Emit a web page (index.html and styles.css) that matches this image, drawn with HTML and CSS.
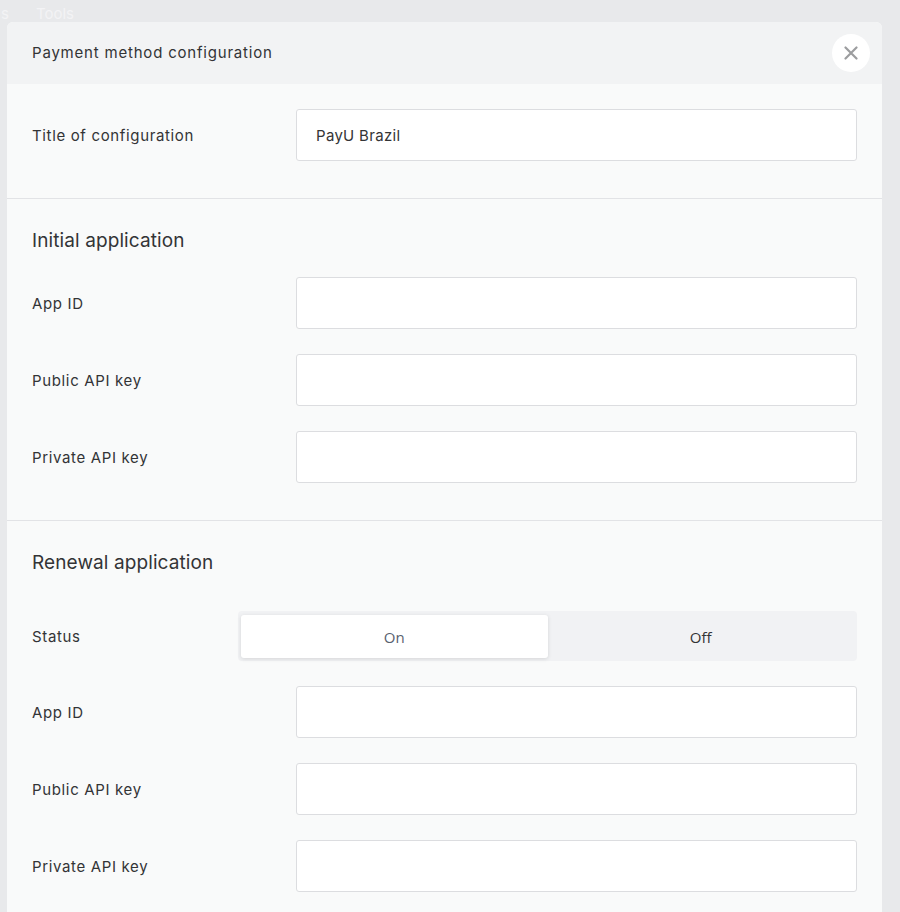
FILE: index.html
```html
<!DOCTYPE html>
<html lang="en">
<head>
    <meta charset="UTF-8">
    <title>Payment method configuration</title>
    <link rel="stylesheet" href="styles.css">
</head>
<body>

    <div class="backnav">
        <span class="backnav-item">s</span>
        <span class="backnav-item">Tools</span>
    </div>

    <div class="modal">
        <div class="modal-head">
            <span class="modal-title">Payment method configuration</span>
            <button class="modal-close" type="button">
                <svg width="14" height="14" viewBox="0 0 14 14">
                    <path d="M1.5 1.5 L12.5 12.5 M12.5 1.5 L1.5 12.5" stroke="#9c9d9f" stroke-width="2.2" stroke-linecap="round" fill="none"/>
                </svg>
            </button>
        </div>

        <div class="section">
            <div class="row">
                <label class="row-label">Title of configuration</label>
                <input class="field" type="text" value="PayU Brazil">
            </div>
        </div>

        <div class="section">
            <h3 class="section-title">Initial application</h3>
            <div class="row">
                <label class="row-label">App ID</label>
                <input class="field" type="text">
            </div>
            <div class="row">
                <label class="row-label">Public API key</label>
                <input class="field" type="text">
            </div>
            <div class="row">
                <label class="row-label">Private API key</label>
                <input class="field" type="text">
            </div>
        </div>

        <div class="section">
            <h3 class="section-title">Renewal application</h3>
            <div class="row row-status">
                <label class="row-label">Status</label>
                <div class="switch">
                    <button class="switch-opt active" type="button">On</button>
                    <button class="switch-opt" type="button">Off</button>
                </div>
            </div>
            <div class="row">
                <label class="row-label">App ID</label>
                <input class="field" type="text">
            </div>
            <div class="row">
                <label class="row-label">Public API key</label>
                <input class="field" type="text">
            </div>
            <div class="row">
                <label class="row-label">Private API key</label>
                <input class="field" type="text">
            </div>
        </div>
    </div>

</body>
</html>
```

FILE: styles.css
```css
* {
    margin: 0;
    padding: 0;
    box-sizing: border-box;
}
body {
    background-color: #e8e9eb;
    font-family: Inter, "Noto Sans", sans-serif;
    color: #333436;
    overflow: hidden;
}
.backnav {
    height: 22px;
    display: flex;
    gap: 27px;
    padding: 6px 0 0 1px;
    white-space: nowrap;
}
.backnav-item {
    font-size: 15px;
    line-height: 16px;
    color: #f3f3f5;
}
.modal {
    position: relative;
    margin-left: 7px;
    width: 875px;
    background-color: #f9fafa;
    border-radius: 6px 6px 0 0;
    overflow: hidden;
}
.modal-head {
    height: 62px;
    background-color: #f2f3f4;
    display: flex;
    align-items: center;
    justify-content: space-between;
    padding: 0 12px 0 25px;
}
.modal-title {
    font-size: 15px;
    letter-spacing: 0.8px;
    margin-top: -2px;
}
.modal-close {
    width: 38px;
    height: 38px;
    border: none;
    border-radius: 50%;
    background-color: #fff;
    display: flex;
    align-items: center;
    justify-content: center;
}
.section {
    padding: 25px 25px 12px;
    border-bottom: 1px solid #e2e3e6;
}
.section-title {
    font-size: 19px;
    font-weight: 400;
    line-height: 34px;
    letter-spacing: 0.1px;
    margin-bottom: 19px;
}
.row {
    display: grid;
    grid-template-columns: 264px 1fr;
    align-items: center;
    margin-bottom: 25px;
}
.row-label {
    font-size: 15px;
    letter-spacing: 0.65px;
}
.field {
    height: 52px;
    border: 1px solid #dcdde0;
    border-radius: 3px;
    background-color: #fff;
    padding: 0 19px;
    font-family: inherit;
    font-size: 15px;
    letter-spacing: 0.3px;
    color: #333436;
}
.row-status {
    grid-template-columns: 206px 1fr;
    padding-top: 12px;
}
.switch {
    height: 50px;
    background-color: #f1f2f4;
    border-radius: 4px;
    padding: 4px 3px 3px;
    display: grid;
    grid-template-columns: 1fr 1fr;
}
.switch-opt {
    border: none;
    border-radius: 3px;
    background: transparent;
    font-family: "Open Sans", "Liberation Sans", sans-serif;
    font-size: 15px;
    color: #333436;
}
.switch-opt.active {
    background-color: #fff;
    color: #596170;
    box-shadow: 0 1px 4px rgba(0, 0, 0, 0.12);
}
```
